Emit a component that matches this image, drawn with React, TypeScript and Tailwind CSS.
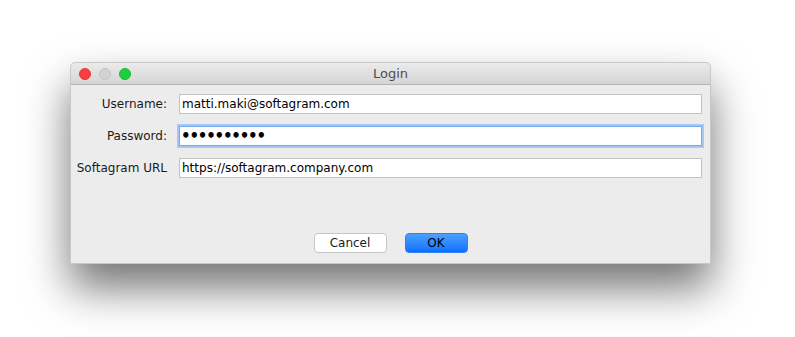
const FIELDS = [
  { label: 'Username:', value: 'matti.maki@softagram.com', focused: false },
  { label: 'Password:', value: '••••••••••', focused: true },
  { label: 'Softagram URL', value: 'https://softagram.company.com', focused: false },
]

export default function App() {
  return (
    <div className="w-[795px] h-[337px] bg-white pt-[62px] pl-[70px] font-['DejaVu_Sans',sans-serif] overflow-hidden">
      <div className="w-[641px] h-[202px] flex flex-col bg-[#ececec] rounded-t-[5px] border border-[#c8c8c8] shadow-[0_24px_44px_rgba(0,0,0,0.55)]">
        <div className="relative h-[22px] flex items-center justify-center rounded-t-[5px] bg-gradient-to-b from-[#ebebeb] to-[#d5d5d5] border-b border-[#b4b4b4]">
          <div className="absolute left-[8px] top-[5px] flex gap-[8px]">
            <span className="w-[12px] h-[12px] rounded-full bg-[#fc3d3f] border border-[#e0383a]" />
            <span className="w-[12px] h-[12px] rounded-full bg-[#d2d2d2] border border-[#c4c4c4]" />
            <span className="w-[12px] h-[12px] rounded-full bg-[#1dcf3b] border border-[#1bb934]" />
          </div>
          <span className="text-[13px] text-[#4d4d4d]">Login</span>
        </div>

        <div className="flex-1 flex flex-col pt-[9px] pb-[10px] pl-[2px] pr-[8px]">
          <div className="flex flex-col gap-[12px]">
            {FIELDS.map((f) => (
              <div key={f.label} className="flex items-center">
                <div className="w-[96px] text-right text-[12px] text-[#1a1a1a] pr-[2px] whitespace-nowrap">
                  {f.label}
                </div>
                <div
                  className={
                    f.focused
                      ? 'ml-[10px] flex-1 h-[20px] flex items-center pl-[1px] pr-[2px] bg-white border border-[#7aa7e6] outline outline-[2px] outline-[#a6c8f5] text-[15px] font-bold leading-none text-black tracking-[-1.2px]'
                      : 'ml-[10px] flex-1 h-[20px] flex items-center px-[2px] bg-white border border-[#c3c3c3] text-[12px] text-black'
                  }
                >
                  {f.value}
                </div>
              </div>
            ))}
          </div>

          <div className="flex-1" />

          <div className="flex justify-center gap-[18px] pl-[6px]">
            <button className="w-[73px] h-[20px] rounded-[4px] bg-white border border-[#c6c6c6] text-[12px] text-[#1a1a1a]">
              Cancel
            </button>
            <button className="w-[63px] h-[20px] rounded-[4px] bg-gradient-to-b from-[#4ca0fd] to-[#0b70fe] border border-[#2f80f0] text-[12px] text-black">
              OK
            </button>
          </div>
        </div>
      </div>
    </div>
  )
}
